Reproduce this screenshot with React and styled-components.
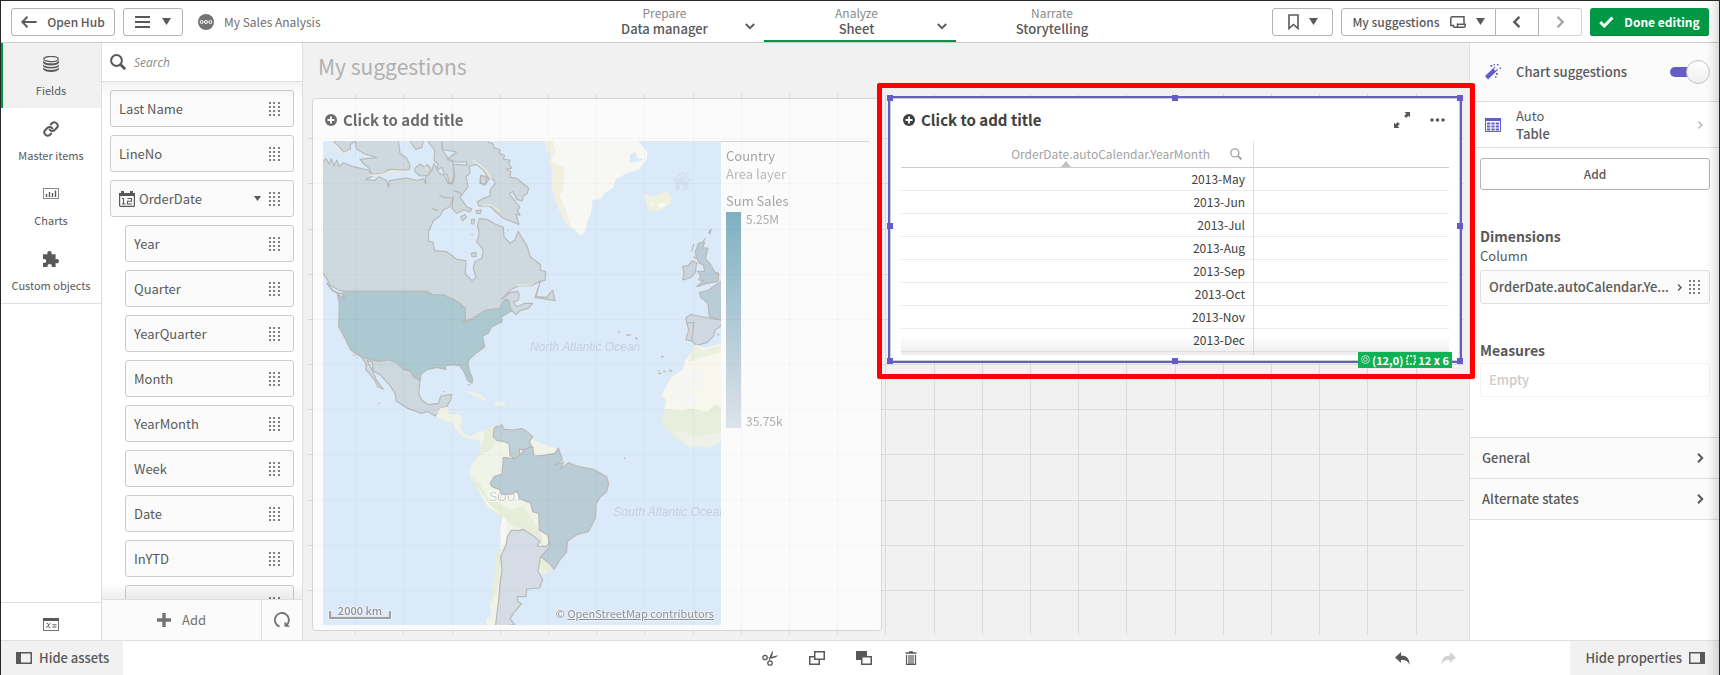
import React from "react";
import styled, { createGlobalStyle, css } from "styled-components";
import { Link as ChainLink } from "lucide-react";

const green = "#009845";
const purple = "#655dc6";
const line = "#dedede";
const ink = "#595959";

const GlobalStyle = createGlobalStyle`
  *, *::before, *::after { box-sizing: border-box; }
  body { margin: 0; }
  body, button, input, table {
    font-family: "Noto Sans CJK KR", "Noto Sans", sans-serif;
    font-size: 13px;
    line-height: 18px;
    color: ${ink};
  }
  button { cursor: pointer; padding: 0; margin: 0; border: 0; background: none; }
  svg { display: block; flex: none; }
`;

/* ---------- page frame ---------- */

const Page = styled.div`
  position: relative;
  display: flex;
  flex-direction: column;
  height: 100vh;
  min-height: 480px;
  border: 1px solid #26262e;
  border-bottom: 0;
  background: #fff;
`;

const EdgeShade = styled.div`
  position: absolute;
  top: 0;
  right: 0;
  bottom: 0;
  width: 13px;
  z-index: 3;
  pointer-events: none;
  background: linear-gradient(to left, rgba(0, 0, 0, 0.13), rgba(0, 0, 0, 0.03) 60%, transparent);
`;

const Workspace = styled.main`
  flex: 1;
  min-height: 0;
  display: flex;
`;

/* ---------- toolbar ---------- */

const Toolbar = styled.header`
  display: grid;
  grid-template-columns: 1fr auto 1fr;
  height: 42px;
  border-bottom: 1px solid #ccc;
`;

const ToolGroup = styled.div`
  display: flex;
  align-items: center;
  justify-content: ${(p) => (p.$end ? "flex-end" : "flex-start")};
  gap: 8px;
  padding: 0 10px;
`;

const Button = styled.button`
  display: flex;
  align-items: center;
  justify-content: center;
  gap: ${(p) => p.$gap || 10}px;
  height: 28px;
  padding: 0 10px;
  border: 1px solid #b3b3b3;
  border-radius: 3px;
  font-size: 12px;
  font-weight: 500;
  white-space: nowrap;
  ${(p) => p.$width && css`width: ${p.$width}px;`}
  ${(p) => p.$primary && css`
    border: 0;
    background: ${green};
    box-shadow: inset 0 -1px 0 #00803a;
    color: #fff;
    font-weight: 700;
  `}
`;

const Segments = styled.div`
  display: flex;

  ${Button} { border-radius: 0; }
  ${Button}:first-child { border-radius: 3px 0 0 3px; }
  ${Button}:last-child { border-radius: 0 3px 3px 0; }
  ${Button} + ${Button} { border-left: 0; }
  ${Button}:disabled { border-color: #d2d2d2; }
`;

const AppName = styled.div`
  display: flex;
  align-items: center;
  gap: 10px;
  margin-left: 7px;
  font-size: 12px;
  color: #6e6e6e;
`;

const Tabs = styled.nav`
  display: flex;
`;

const Tab = styled.button`
  display: grid;
  grid-template-columns: 1fr auto;
  align-items: center;
  width: 192px;
  padding: 0 ${(p) => (p.$menu ? 9 : 0)}px 0 0;
  border-bottom: 2px solid ${(p) => (p.$active ? green : "transparent")};
  & > svg { margin-top: 10px; }
`;

const TabText = styled.span`
  display: flex;
  flex-direction: column;
  align-items: center;
  font-weight: 500;
  line-height: 16px;
  ${(p) => p.$menu && css`margin-right: -12px;`}
`;

const TabHint = styled.span`
  font-size: 12px;
  font-weight: 400;
  line-height: 16px;
  color: #8a8a8a;
`;

/* ---------- left rail ---------- */

const Rail = styled.nav`
  flex: none;
  display: flex;
  flex-direction: column;
  width: 101px;
  border-right: 1px solid ${line};
`;

const RailTabs = styled.div`
  border-bottom: 1px solid ${line};
`;

const RailTab = styled.button`
  display: flex;
  flex-direction: column;
  align-items: center;
  gap: 9px;
  width: 100%;
  height: 65px;
  padding: 13px 2px 0 0;
  border-left: 2px solid ${(p) => (p.$active ? green : "transparent")};
  background: ${(p) => (p.$active ? "#f1f1f1" : "transparent")};
  font-size: 11px;
  white-space: nowrap;
`;

const VariablesButton = styled.button`
  display: flex;
  align-items: center;
  justify-content: center;
  height: 38px;
  margin-top: auto;
  padding-top: 6px;
  border-top: 1px solid ${line};
`;

/* ---------- assets panel ---------- */

const Assets = styled.section`
  flex: none;
  display: flex;
  flex-direction: column;
  width: 201px;
  border-right: 1px solid ${line};
`;

const SearchRow = styled.label`
  flex: none;
  display: flex;
  align-items: center;
  gap: 8px;
  height: 39px;
  padding: 0 8px;
  border-bottom: 1px solid ${line};
`;

const SearchInput = styled.input`
  flex: 1;
  min-width: 0;
  padding: 2px 0 0;
  border: 0;
  outline: 0;
  background: none;
  font-family: "Open Sans", "Noto Sans", sans-serif;
  font-size: 12px;
  font-style: italic;
  &::placeholder { color: #8c8c8c; opacity: 1; }
`;

const FieldScroller = styled.div`
  position: relative;
  flex: 1;
  min-height: 0;
  overflow: hidden;
  &::before, &::after {
    content: "";
    position: absolute;
    left: 0;
    right: 0;
    height: 16px;
    pointer-events: none;
  }
  &::before { top: 0; background: linear-gradient(rgba(0, 0, 0, 0.05), transparent); }
  &::after { bottom: 0; background: linear-gradient(transparent, rgba(0, 0, 0, 0.07)); }
`;

const FieldList = styled.ul`
  display: flex;
  flex-direction: column;
  gap: 8px;
  margin: 0;
  padding: 8px;
  list-style: none;
`;

const Field = styled.li`
  display: flex;
  align-items: center;
  gap: 4px;
  height: 37px;
  margin-left: ${(p) => (p.$nested ? 15 : 0)}px;
  padding: 0 13px 0 8px;
  border: 1px solid #ccc;
  border-radius: 3px;
  background: #fbfbfb;
`;

const FieldName = styled.span`
  flex: 1;
`;

const CaretSlot = styled.span`
  margin-right: 4px;
`;

const AssetActions = styled.div`
  flex: none;
  display: flex;
  height: 41px;
  border-top: 1px solid ${line};
  background: #fbfbfb;
`;

const AssetAction = styled.button`
  display: flex;
  align-items: center;
  justify-content: center;
  gap: 11px;
  color: #737373;
  flex: ${(p) => (p.$grow ? "1" : "none")};
  & + & { width: 41px; border-left: 1px solid ${line}; }
`;

/* ---------- sheet ---------- */

const Sheet = styled.section`
  position: relative;
  z-index: 1;
  flex: 1;
  min-width: 0;
  display: flex;
  flex-direction: column;
  padding: 0 5px 5px;
  background: #f1f1f1;
`;

const SheetTitle = styled.h1`
  margin: 0;
  height: 51px;
  padding: 9px 10px;
  font-size: 21px;
  font-weight: 400;
  line-height: 28px;
  color: #b0b0b0;
`;

const Canvas = styled.div`
  position: relative;
  flex: 1;
  min-height: 0;
  display: grid;
  grid-template-columns: 1fr 1fr;
  grid-template-rows: 1fr 1fr;
`;

const GridLines = styled.div`
  position: absolute;
  inset: 0;
  display: flex;
  flex-direction: ${(p) => (p.$rows ? "column" : "row")};
  span { flex: 1; }
  span + span { ${(p) => (p.$rows ? "border-top" : "border-left")}: 1px solid #dadada; }
`;

const Cell = styled.div`
  position: relative;
  grid-row: ${(p) => (p.$tall ? "span 2" : "auto")};
  min-width: 0;
  min-height: 0;
  padding: 4px;
`;

const Card = styled.article`
  display: flex;
  flex-direction: column;
  height: 100%;
  padding: 0 10px 5px;
  border: 1px solid #ccc;
  border-radius: 4px;
  background: #fff;
  opacity: ${(p) => (p.$dimmed ? 0.75 : 1)};
`;

const CardHead = styled.div`
  flex: none;
  display: flex;
  align-items: center;
  gap: 20px;
  height: 42px;
  padding: 0 4px 0 2px;
`;

const CardTitle = styled.h2`
  flex: 1;
  display: flex;
  align-items: center;
  gap: 6px;
  margin: 0;
  font-size: 15px;
  font-weight: 700;
  line-height: 20px;
  color: #404040;
`;

/* ---------- map ---------- */

const MapBody = styled.div`
  flex: 1;
  min-height: 0;
  display: flex;
  margin-right: 2px;
`;

const MapView = styled.div`
  position: relative;
  flex: 1;
  min-width: 0;
  overflow: hidden;
  border-top-left-radius: 4px;
  background: #d4e8fc;
  svg.world { width: 100%; height: 100%; }
`;

const OceanLabel = styled.span`
  position: absolute;
  left: ${(p) => p.$left}%;
  top: ${(p) => p.$top}%;
  font-family: "Liberation Sans", Arial, sans-serif;
  font-size: 12px;
  font-style: italic;
  line-height: 16px;
  white-space: nowrap;
  color: #b6c4e4;
`;

const ScaleBar = styled.span`
  position: absolute;
  left: 6px;
  bottom: 6px;
  width: 62px;
  height: 8px;
  border: 2px solid #858585;
  border-top: 0;
  outline: 1px solid rgba(255, 255, 255, 0.5);
`;

const ScaleText = styled.span`
  position: absolute;
  left: 6px;
  bottom: 7px;
  width: 62px;
  text-align: center;
  font-size: 11px;
  font-weight: 500;
  line-height: 16px;
  color: #707070;
  text-shadow: 0 0 2px #fff, 0 0 2px #fff;
`;

const Attribution = styled.span`
  position: absolute;
  right: 7px;
  bottom: 4px;
  font-size: 11px;
  line-height: 16px;
  color: #707070;
  text-shadow: 0 0 2px #fff, 0 0 2px #fff;
  a { color: inherit; }
`;

const Legend = styled.div`
  flex: none;
  width: 148px;
  padding: 5px 0 0 5px;
  border-top: 1px solid #ccc;
`;

const LegendLabel = styled.div`
  font-size: 13px;
  line-height: 18px;
  margin-top: ${(p) => (p.$spaced ? 9 : 0)}px;
  color: ${(p) => (p.$light ? "#a8a8a8" : "#8a8a8a")};
`;

const LegendScale = styled.div`
  display: flex;
  gap: 5px;
  height: 216px;
  margin-top: 2px;
`;

const LegendRamp = styled.div`
  width: 15px;
  background: linear-gradient(#5a9bb0, #d8dee9);
`;

const LegendRange = styled.div`
  display: flex;
  flex-direction: column;
  justify-content: space-between;
  padding-bottom: 1px;
  font-size: 12px;
  line-height: 13px;
  color: #959595;
`;

/* ---------- straight table ---------- */

const TableView = styled.div`
  position: relative;
  flex: 1;
  min-height: 0;
  overflow: hidden;
  &::after {
    content: "";
    position: absolute;
    left: 0;
    right: 0;
    bottom: 0;
    height: 20px;
    background: linear-gradient(transparent, rgba(0, 0, 0, 0.07));
    pointer-events: none;
  }
`;

const Table = styled.table`
  width: 100%;
  table-layout: fixed;
  border-collapse: separate;
  border-spacing: 0;
  color: #404040;

  th, td {
    height: 23px;
    padding: 0 8px 0 0;
    border-bottom: 1px solid #ebebeb;
    font-size: 12px;
    line-height: 18px;
    font-weight: 400;
    text-align: right;
  }
  th { height: 27px; border-bottom-color: #ccc; }
  th:first-child, td:first-child { width: 353px; border-right: 1px solid ${line}; }
`;

const HeaderCell = styled.span`
  position: relative;
  display: flex;
  align-items: center;
  justify-content: flex-end;
  gap: 20px;
  height: 26px;
  padding-right: 3px;
  color: #a3a3a3;
`;

const SortMark = styled.span`
  position: absolute;
  bottom: 0;
  right: 174px;
  border: 5px solid transparent;
  border-top: 0;
  border-bottom: 6px solid #c0c0c0;
`;

const Selection = styled.div`
  position: absolute;
  inset: 2px;
  border: 2px solid ${purple};
  pointer-events: none;
`;

const Handle = styled.span`
  position: absolute;
  width: 6px;
  height: 6px;
  background: ${purple};
  ${(p) => (p.$y === "top" ? "top: -3px;" : p.$y === "bottom" ? "bottom: -3px;" : "top: calc(50% - 6px);")}
  ${(p) => (p.$x === "left" ? "left: -3px;" : p.$x === "right" ? "right: -3px;" : "left: calc(50% - 3px);")}
`;

const SizeBadge = styled.span`
  position: absolute;
  right: 8px;
  bottom: -7px;
  display: flex;
  align-items: center;
  gap: 2px;
  height: 16px;
  padding: 0 3px;
  background: #0fb155;
  color: #fff;
  font-size: 11px;
  font-weight: 700;
  line-height: 16px;
  white-space: nowrap;
  svg + span { margin-right: 1px; }
  span:last-child { margin: 0; }
`;

const Highlight = styled.div`
  position: absolute;
  inset: -11px -11px -14px -9px;
  border: 5px solid #f00;
  border-radius: 2px;
  pointer-events: none;
`;

/* ---------- properties ---------- */

const Properties = styled.aside`
  flex: none;
  display: flex;
  flex-direction: column;
  width: 250px;
  border-left: 1px solid ${line};
`;

const PropRow = styled.div`
  display: flex;
  align-items: center;
  gap: 15px;
  height: ${(p) => p.$height}px;
  padding: 0 9px 0 15px;
  border-bottom: 1px solid ${line};
  background: ${(p) => (p.$shaded ? "#fbfbfb" : "#fff")};
`;

const PropLabel = styled.label`
  flex: 1;
  font-weight: 500;
`;

const Switch = styled.input`
  appearance: none;
  position: relative;
  flex: none;
  width: 40px;
  height: 24px;
  margin: 0;
  &::before {
    content: "";
    position: absolute;
    inset: 7px 8px 7px 0;
    border-radius: 5px;
    background: ${purple};
  }
  &::after {
    content: "";
    position: absolute;
    top: 0;
    right: 0;
    width: 24px;
    height: 24px;
    border: 1px solid #c4c4c4;
    border-radius: 50%;
    background: linear-gradient(#fff, #eee);
  }
`;

const ChartType = styled.button`
  display: flex;
  align-items: center;
  gap: 15px;
  height: 46px;
  padding: 0 15px;
  border-bottom: 1px solid ${line};
  text-align: left;
`;

const ChartTypeText = styled.span`
  flex: 1;
  display: flex;
  flex-direction: column;
  strong { font-weight: 500; }
`;

const PropBody = styled.div`
  flex: none;
  display: flex;
  flex-direction: column;
  height: 289px;
  padding: 10px 9px 0 10px;
  ${Button} { height: 32px; }
`;

const PropHeading = styled.h3`
  margin: 36px 0 0;
  font-size: 14px;
  font-weight: 700;
  line-height: 20px;
`;

const PropHint = styled.div`
  margin-bottom: 4px;
  line-height: 20px;
`;

const DimensionItem = styled.button`
  flex: none;
  display: flex;
  align-items: center;
  gap: 6px;
  height: 34px;
  padding: 0 9px 0 8px;
  border: 1px solid ${line};
  border-radius: 3px;
  background: #fbfbfb;
  font-weight: 500;
`;

const DimensionName = styled.span`
  flex: 1;
  text-align: left;
  white-space: nowrap;
`;

const EmptyItem = styled.div`
  flex: none;
  display: flex;
  align-items: center;
  height: 34px;
  margin-top: 3px;
  padding: 0 8px;
  border: 1px solid #f3f3f3;
  border-radius: 3px;
  color: #ccc;
  font-weight: 500;
`;

const Section = styled.button`
  flex: none;
  display: flex;
  align-items: center;
  justify-content: space-between;
  height: 41px;
  padding: 0 14px 0 12px;
  border-top: 1px solid ${line};
  background: #fbfbfb;
  font-weight: 500;
  &:last-child { height: 42px; border-bottom: 1px solid ${line}; }
`;

/* ---------- footer ---------- */

const Footer = styled.footer`
  flex: none;
  display: grid;
  grid-template-columns: 1fr auto 1fr;
  height: 35px;
  border-top: 1px solid ${line};
`;

const FooterSide = styled.div`
  display: flex;
  align-items: center;
  justify-content: ${(p) => (p.$end ? "flex-end" : "flex-start")};
`;

const PanelToggle = styled.button`
  display: flex;
  align-items: center;
  gap: 7px;
  height: 100%;
  padding: 0 14px 0 15px;
  background: #f1f1f1;
  font-weight: 500;
`;

const IconBar = styled.div`
  display: flex;
  align-items: center;
  gap: 31px;
  margin-right: ${(p) => (p.$history ? 114 : 0)}px;
  margin-left: ${(p) => (p.$history ? 0 : -40)}px;
`;

/* ---------- icons ---------- */

const Svg = ({ w = 16, h = 16, box, children, ...rest }) => (
  <svg width={w} height={h} viewBox={box || `0 0 ${w} ${h}`} fill="none" aria-hidden="true" {...rest}>{children}</svg>
);

const Caret = ({ w = 9, h = 7 }) => (
  <Svg w={w} h={h} box="0 0 8 6" preserveAspectRatio="none"><path d="M0 0h8L4 6z" fill={ink} /></Svg>
);

const Chevron = ({ dir = "right", color = ink, size = 10, weight = 2 }) => {
  const turn = { right: 0, down: 90, left: 180 }[dir];
  return (
    <Svg w={size} h={size} box="0 0 10 10">
      <path d="M3 .8 7.2 5 3 9.2" stroke={color} strokeWidth={weight} transform={`rotate(${turn} 5 5)`} />
    </Svg>
  );
};

const DragDots = () => (
  <Svg w={11} h={14}>
    {[0, 4, 8, 12].map((y) => [0, 4, 9].map((x) => (
      <rect key={`${x}-${y}`} x={x} y={y} width="2" height="2" fill="#808080" />
    )))}
  </Svg>
);

const BackArrow = () => (
  <Svg w={16} h={12}><path d="M15.6 6H1.5M6.500 .8 1.300 6l5.200 5.200" stroke={ink} strokeWidth="2" /></Svg>
);
const MenuIcon = () => (
  <Svg w={15} h={12}><path d="M0 1h15M0 6h15M0 11h15" stroke={ink} strokeWidth="2" /></Svg>
);
const AppIcon = () => (
  <Svg>
    <circle cx="8" cy="8" r="8" fill="#737373" />
    <circle cx="3.700" cy="8" r="1.500" stroke="#fff" /><circle cx="8" cy="8" r="1.500" stroke="#fff" /><circle cx="12.300" cy="8" r="1.500" stroke="#fff" />
  </Svg>
);
const BookmarkIcon = () => (
  <Svg w={11} h={16}><path d="M1 1h9v13.500L5.500 10.500 1 14.500z" stroke={ink} strokeWidth="1.600" /></Svg>
);
const SheetIcon = () => (
  <Svg w={16} h={12}>
    <path d="M3.500 11.200V9.500H.8V2.300Q.8.800 2.300.8H14v7" stroke={ink} strokeWidth="1.500" />
    <path d="M3.500 11.200h10.200q1.500 0 1.500-1.500V8.200H7.500v3" stroke={ink} strokeWidth="1.500" />
  </Svg>
);
const CheckIcon = () => (
  <Svg w={15} h={12}><path d="M1.300 6.200 5.300 10 13.500 1.500" stroke="#fff" strokeWidth="3" /></Svg>
);

const DatabaseIcon = () => (
  <Svg>
    <ellipse cx="8" cy="3" rx="7.300" ry="2.600" stroke={ink} strokeWidth="1.200" />
    <path d="M0 4.500c1 2 4 2.800 8 2.800s7-.8 8-2.800v2.300c-1 2-4 2.700-8 2.700S1 8.800 0 6.800z" fill={ink} />
    <path d="M0 8.500c1 1.600 4 2.500 8 2.500s7-.9 8-2.500v1.600c-1 1.800-4 2.500-8 2.500s-7-.7-8-2.500z" fill={ink} />
    <path d="M0 11.600c1 1.600 4 2.500 8 2.500s7-.9 8-2.500v1.400c-.8 2-4 3-8 3s-7.200-1-8-3z" fill={ink} />
  </Svg>
);
const LinkIcon = () => <ChainLink size={16} strokeWidth={3} color={ink} aria-hidden="true" />;
const ChartsIcon = () => (
  <Svg>
    <rect x=".5" y="2.500" width="15" height="10" stroke="#8a8a8a" />
    <path d="M3.500 11V8M6.500 11V6M9.500 11V7M12.500 11V4.500" stroke={ink} strokeWidth="1.400" />
  </Svg>
);
const PuzzleIcon = () => (
  <Svg>
    <path d="M0 3.200h4.600C3.700 1.600 5 0 6.500 0s2.800 1.600 1.900 3.200h4.200v5.200c1.700-1 3.400.2 3.400 1.800s-1.700 2.700-3.400 1.700V16H8.600c.9-1.800-.4-3-1.900-3s-2.800 1.200-2 3H0v-4.400c1.800.9 3.200-.2 3.200-1.600S1.800 7.500 0 8.400z" fill={ink} />
  </Svg>
);
const VariablesIcon = () => (
  <Svg w={16} h={13}>
    <rect x=".5" y=".5" width="15" height="12" stroke="#737373" />
    <path d="M0 0h16v3H0z" fill={ink} />
    <path d="M3.500 5.500c1.600-.4 2 .6 2 2s.5 2.600 1.800 2M7.500 5.300c-1.500.2-3 3.800-4.300 4.300M9.500 6.800h4M9.500 9h4" stroke={ink} strokeWidth="1" />
  </Svg>
);
const SearchIcon = ({ size = 16, color = ink, weight = 2 }) => (
  <Svg w={size} h={size} box="0 0 16 16">
    <circle cx="6.500" cy="6.500" r="5.400" stroke={color} strokeWidth={weight} />
    <path d="m10.500 10.500 4.700 4.700" stroke={color} strokeWidth={weight + 0.8} />
  </Svg>
);
const CalendarIcon = () => (
  <Svg>
    <rect x=".6" y="2.600" width="14.800" height="12.800" rx="1" stroke={ink} strokeWidth="1.200" />
    <path d="M0 2h2V0h3v2h6V0h3v2h2v3H0z" fill={ink} />
    <path d="M3 7.500h1.500V13M3 13h3.500M8.500 7.500h4v2.700h-4V13H13" stroke={ink} strokeWidth="1.100" />
  </Svg>
);
const PlusIcon = () => (
  <Svg w={14} h={14}><path d="M7 0v14M0 7h14" stroke="#737373" strokeWidth="3.400" /></Svg>
);
const RefreshIcon = () => (
  <Svg>
    <path d="M5.500 14.600A7 7 0 1 1 13 12.800" stroke="#737373" strokeWidth="1.800" />
    <path d="M10.500 9.500v5.300H16z" fill="#737373" />
  </Svg>
);
const AddTitleIcon = () => (
  <Svg w={12} h={12}>
    <circle cx="6" cy="6" r="6" fill="#404040" />
    <path d="M6 2.500v7M2.500 6h7" stroke="#fff" strokeWidth="1.800" />
  </Svg>
);
const ExpandIcon = () => (
  <Svg>
    <path d="M10.500 0H16v5.500l-1.700-1.700-2.100 2.100-2-2 2.100-2.200zM5.500 16H0v-5.500l1.700 1.700 2-2.100 2.100 2-2.100 2.100z" fill={ink} />
  </Svg>
);
const MoreIcon = () => (
  <Svg w={15} h={4}><circle cx="2" cy="2" r="1.800" fill={ink} /><circle cx="7.500" cy="2" r="1.800" fill={ink} /><circle cx="13" cy="2" r="1.800" fill={ink} /></Svg>
);
const TargetIcon = () => (
  <Svg w={9} h={9}><circle cx="4.500" cy="4.500" r="4" stroke="#b5e6c9" /><circle cx="4.500" cy="4.500" r="1.800" stroke="#b5e6c9" /></Svg>
);
const AreaIcon = () => (
  <Svg w={10} h={10}><rect x="1" y="1" width="8" height="8" stroke="#fff" strokeWidth="1.600" strokeDasharray="2 1.200" /></Svg>
);
const WandIcon = () => (
  <Svg>
    <path d="M0 12 10 2.500 13 5.800 3 15.500z" fill={purple} />
    <path d="m8.800 5 2-2 1.600 1.800-2 2z" fill="#fff" />
    <path d="M5.500 1h1.800v1.800H5.500zM12 0h1.500v1.500H12zM14.500 3.500H16V5h-1.500zM11 9h1.800v1.800H11zM10 12.300h1.500v1.500H10zM8.500 0H10v1.200H8.500z" fill={purple} />
  </Svg>
);
const TableIcon = () => (
  <Svg w={16} h={14}>
    <rect x=".5" y=".5" width="15" height="13" stroke={purple} />
    <path d="M0 0h16v3H0z" fill={purple} />
    <path d="M2 5.500h12M2 8.500h12M2 11.500h12" stroke={purple} strokeWidth="1.800" strokeDasharray="3.300 1.050" />
  </Svg>
);
const CutIcon = () => (
  <Svg>
    <circle cx="3" cy="7.500" r="2.200" stroke={ink} strokeWidth="1.300" />
    <circle cx="8" cy="13" r="2.200" stroke={ink} strokeWidth="1.300" />
    <path d="M5 8 16 5.200c-1.500 2.300-4.500 3-7.500 3.400zM7.800 11 7 8.500 10.500.5c1 2.500 0 5.500-2 8z" fill={ink} />
  </Svg>
);
const CopyIcon = () => (
  <Svg w={16} h={14}>
    <rect x="5.750" y=".75" width="9.500" height="7.500" stroke={ink} strokeWidth="1.500" />
    <path d="M5 5.750H.75v7.500h9.500V9" stroke={ink} strokeWidth="1.500" />
  </Svg>
);
const PasteIcon = () => (
  <Svg w={16} h={14}>
    <path d="M0 0h11v9H0z" fill={ink} />
    <rect x="5.750" y="5.750" width="9.500" height="7.500" fill="#fff" stroke={ink} strokeWidth="1.500" />
  </Svg>
);
const TrashIcon = () => (
  <Svg w={16} h={14} box="-2.500 0 16 14">
    <path d="M0 2h11M3.500 1h4" stroke={ink} strokeWidth="1.600" />
    <path d="M1 4v9.300h9V4M3.500 4v9M5.500 4v9M7.500 4v9" stroke={ink} strokeWidth="1.200" />
  </Svg>
);
const UndoIcon = ({ color = ink, flip }) => (
  <Svg w={15} h={13}>
    <path d="M0 5.500 6 0v3.500c5.500 0 8.800 3 8.500 9.500-1.200-3.500-3.500-5.200-8.500-5v3z" fill={color} transform={flip ? "matrix(-1 0 0 1 15 0)" : undefined} />
  </Svg>
);
const PanelIcon = ({ right }) => (
  <Svg w={16} h={12}>
    <rect x=".75" y=".75" width="14.500" height="10.500" stroke={ink} strokeWidth="1.500" />
    <path d={right ? "M11 0h5v12h-5z" : "M0 0h5v12H0z"} fill={ink} />
  </Svg>
);

/* ---------- map drawing ---------- */

const edge = { stroke: "#a8a6a4", strokeWidth: 3.5, strokeLinejoin: "round" };

const WorldMap = () => (
  <svg className="world" viewBox="39 153 1194 1452" preserveAspectRatio="xMidYMid slice" aria-label="Sales by country" role="img">
    {/* Greenland and Iceland */}
    <path fill="#f3efdc" d="M705 153 708 182 722 190 715 220 728 232 725 290 733 320 745 355 758 385 778 412 800 418 760 330 762 230 735 153z" />
    <path fill="#f9f9f6" d="M728 153 738 185 722 212 748 225 762 232 760 300 748 315 762 345 775 385 785 412 812 437 825 425 833 392 843 370 848 330 870 328 885 310 910 292 918 268 950 250 985 240 1010 210 1012 185 985 153z" />
    <path fill="#d4e8fc" d="M975 186 982 204 1002 208 985 215 960 218 960 195z" />
    <path fill="#eef1d6" d="M1000 312 1014 314 1018 322 1040 316 1070 305 1084 325 1082 340 1060 354 1045 362 1015 362 1010 345z" />
    <path fill="#fbfbf6" d="M1040 342 1062 336 1066 350 1048 354zM1022 335h8v12h-8z" />

    {/* Canada */}
    <path {...edge} fill="#c1d2da" d="M30 140 530 140 536 158 548 160 552 172 570 180 568 190 584 196 580 208 600 210 596 222 606 234 588 238 602 244 600 262 622 266 640 282 656 294 652 310 640 318 636 333 620 328 608 304 598 312 616 335 630 352 622 360 630 376 618 372 627 403 605 395 580 385 562 370 540 348 506 348 502 335 520 325 540 318 540 300 556 280 550 268 530 262 512 256 510 280 524 286 536 268 520 240 500 224 478 228 480 250 468 260 474 290 458 312 450 322 470 350 485 356 480 366 462 360 440 370 426 355 430 320 420 350 400 360 390 378 370 392 356 425 355 453 368 456 374 482 410 485 440 508 468 512 466 552 486 572 498 562 490 535 495 515 515 505 520 480 500 455 508 430 502 410 508 385 530 388 555 402 580 412 582 440 600 460 615 450 624 424 640 450 652 470 660 500 692 524 690 540 707 545 706 570 690 576 678 620 710 622 728 600 735 632 675 622 692 572 668 586 625 588 605 598 590 612 575 628 600 608 622 604 628 615 625 630 610 636 620 650 645 640 668 640 655 655 630 662 618 674 605 662 600 652 595 630 585 628 575 655 530 660 500 678 458 697 466 685 465 655 430 628 400 615 365 613 350 604 100 604 85 600 60 585 50 565 39 550 30 535z" />
    <path fill="none" stroke="#a8a6a4" strokeWidth="5" strokeLinejoin="round" d="M50 578 66 600 80 608 98 612 102 626" />
    <g {...edge} fill="#d4e8fc">
      <path d="M30 140 73 140 74 158 88 170 102 187 122 178 120 165 135 153 140 178 165 192 200 203 150 208 162 222 178 236 184 252 218 252 240 238 282 240 298 238 300 225 290 205 270 190 264 140 296 140 304 160 318 178 336 172 340 150 352 140 358 160 374 180 372 210 384 222 380 240 396 232 402 252 412 255 416 276 424 280 432 262 430 218 415 206 398 182 396 140 396 178 440 186 412 208 440 216 470 216 470 226 430 222 434 258 428 282 414 280 404 258 388 250 372 220 366 240 346 262 348 282 340 266 322 272 290 264 262 268 238 272 236 292 230 272 208 260 192 272 168 268 188 258 174 240 130 230 100 218 88 230 80 210 72 228 64 206 58 222 48 206 30 222z" />
      <ellipse cx="520" cy="270" rx="9" ry="12" fill="#c1d2da" />
    </g>
    <g {...edge} fill="#c1d2da">
      <path d="M315 235 330 222 345 232 352 224 362 236 356 256 330 258 315 245zM452 380 464 374 470 382 458 392zM484 388 494 388 492 402 485 402zM498 362 514 360 512 370 500 370z" />
      <path d="M484 490 498 488 498 500 486 500zM366 355 384 362M388 314 400 322 424 324M430 302 450 308 456 318M484 434h4M592 422h4" />
    </g>
    <path fill="none" stroke="#efe8cf" strokeWidth="4" d="M178 256 215 254 246 242 285 248M488 212 505 222 530 244 545 268M516 344 545 346 572 366M620 586 668 584M345 230 352 240M72 164 100 190 122 182" />

    {/* United States and Mexico */}
    <path {...edge} fill="#96bbc6" d="M82 612 104 626 100 604 350 604 365 613 400 615 430 628 450 640 465 655 466 685 458 697 495 686 500 676 530 660 570 656 576 640 585 628 597 632 600 652 606 662 575 680 576 696 545 710 535 730 518 738 524 770 500 788 478 808 474 822 478 842 488 868 486 880 474 872 462 846 450 828 430 824 404 828 408 838 380 832 350 840 333 852 330 872 312 860 300 842 280 838 262 820 240 810 205 814 155 802 122 780 100 735 86 710 88 640z" />
    <path {...edge} fill="#c1cfd8" d="M155 802 205 814 240 810 262 820 280 838 300 842 312 862 330 872 326 910 335 930 355 944 385 940 392 918 425 913 422 930 410 950 390 955 388 968 375 978 352 964 335 970 295 956 258 932 256 912 240 886 212 856 190 842 186 815 172 812 188 842 198 868 220 898 204 890 192 868 178 850 168 840 168 822z" />
    <path fill="none" stroke="#a8a6a4" strokeWidth="3" d="M128 795h8M138 802h4M205 940h5M400 905h5M472 884h8" />

    {/* Caribbean and Central America */}
    <path fill="#f0f2e2" d="M465 902 490 906 512 916 530 928 522 933 500 920 480 912zM552 935 575 934 588 942 580 948 556 947zM602 945h12v4h-12z" />
    <path fill="#f1f3e3" d="M378 980 390 955 412 950 416 972 452 974 458 990 450 1012 462 1030 484 1038 500 1028 520 1040 508 1050 478 1046 458 1040 440 1022 428 1000 402 990z" />

    {/* South America */}
    <path fill="#f0f4e6" d="M500 1030 528 1020 552 1008 600 1030 662 1042 690 1060 735 1074 745 1080 740 1150 700 1300 722 1360 726 1440 708 1450 684 1446 640 1340 592 1340 560 1605 530 1605 528 1588 545 1575 538 1545 550 1500 560 1440 572 1380 572 1310 578 1275 540 1250 520 1228 510 1200 492 1178 480 1160 482 1130 500 1104 514 1082 510 1056z" />
    <path fill="#e3ecd2" d="M524 1020 552 1012 562 1050 540 1080 500 1102 520 1060zM482 1160 508 1180 530 1220 575 1245 600 1260 640 1250 690 1320 700 1370 650 1320 610 1310 570 1280 530 1250zM688 1402 728 1430 724 1445 690 1444zM560 1380 574 1400 566 1470 548 1540 540 1540 552 1470z" />
    <path fill="#f9faf6" d="M480 1150 500 1190 545 1250 590 1290 588 1340 572 1380 570 1320 578 1278 535 1250 505 1200z" />
    <text x="538" y="1232" fontFamily="Liberation Sans, Arial, sans-serif" fontSize="36" fill="#bdbdbd" stroke="#fff" strokeWidth="6" paintOrder="stroke">SOUT</text>
    <path {...edge} fill="#afc5d0" d="M552 1016 550 1040 562 1052 580 1054 597 1060 600 1095 612 1106 630 1102 628 1078 645 1078 666 1070 658 1055 668 1040 650 1024 636 1016 610 1020 582 1018 575 1004 566 1012 560 1008z" />
    <path {...edge} fill="#a8c1cd" d="M580 1102 612 1106 632 1094 640 1080 668 1070 672 1098 702 1096 734 1090 745 1074 757 1108 736 1126 760 1116 752 1136 776 1118 806 1130 850 1138 872 1150 890 1160 896 1180 890 1205 870 1222 858 1242 856 1284 836 1324 800 1334 772 1354 770 1386 750 1410 732 1438 722 1424 692 1400 718 1368 714 1336 688 1320 686 1270 668 1265 662 1240 630 1226 620 1202 606 1212 575 1213 568 1198 546 1190 541 1180 552 1160 576 1152z" />
    <path {...edge} fill="#ccd6e1" d="M592 1340 605 1320 625 1322 640 1318 665 1334 690 1354 682 1368 708 1370 720 1356 718 1372 692 1400 684 1444 698 1470 688 1494 650 1497 648 1520 622 1520 624 1534 634 1542 610 1570 600 1586 614 1604 556 1612 566 1530 570 1480 576 1440 572 1400 590 1360z" />

    {/* Western Europe */}
    <g {...edge} fill="#a8c1cd">
      <path d="M1165 460 1184 456 1178 474 1194 474 1186 505 1202 524 1214 546 1226 550 1224 574 1190 580 1160 590 1180 572 1166 570 1172 556 1162 544 1184 544 1180 524 1168 520 1158 500 1156 484zM1196 428 1203 418 1200 432zM1178 456 1186 444" />
      <path fill="none" d="M1144 484 1152 462M1150 500 1158 506" />
      <path fill="#bbcdd7" d="M1118 530 1136 526 1146 512 1160 518 1156 548 1140 564 1118 570 1122 550z" />
      <path d="M1240 572 1220 582 1196 600 1168 608 1172 622 1194 640 1198 680 1240 692z" />
      <path fill="#c6d1dc" d="M1128 684 1142 673 1165 678 1240 692 1240 702 1215 720 1210 740 1190 758 1160 766 1145 752 1128 750 1136 720 1130 698z" />
      <path fill="none" d="M1130 698 1152 698 1145 752" />
    </g>

    {/* West Africa and Atlantic islands */}
    <path fill="#fbfaee" d="M1240 758 1185 775 1158 764 1140 790 1125 812 1120 838 1085 862 1068 890 1055 915 1068 930 1062 970 1240 980z" />
    <path fill="#eaf1d8" d="M1155 768 1180 780 1240 764 1240 785 1180 800 1135 815 1140 790z" />
    <path fill="#f7f7f4" d="M1120 840 1170 840 1190 880 1130 900 1170 930 1150 950 1090 930 1080 890z" />
    <path fill="#e4edd4" d="M1066 956 1115 962 1140 955 1190 965 1215 945 1240 950 1240 1052 1195 1072 1165 1068 1140 1075 1100 1045 1070 1020 1055 990z" />
    <path fill="#eef2e6" d="M1095 1030 1120 1022 1160 1042 1200 1030 1240 1030 1240 1055 1195 1072 1165 1068 1140 1075z" />
    <path fill="none" stroke="#b0aca0" strokeWidth="5" d="M948 735h14M927 722v6M976 742l6 6M1053 800h8M1045 850h8M1060 844h6M1046 840v4M1078 840l8 4M1222 734h6M942 1105h4" />
  </svg>
);

const HomeMark = styled.button`
  position: absolute;
  top: 29px;
  right: 30px;
  color: #c9dbee;
`;

/* ---------- data ---------- */

const fields = [
  { name: "Last Name" },
  { name: "LineNo" },
  { name: "OrderDate", date: true },
  { name: "Year", nested: true },
  { name: "Quarter", nested: true },
  { name: "YearQuarter", nested: true },
  { name: "Month", nested: true },
  { name: "YearMonth", nested: true },
  { name: "Week", nested: true },
  { name: "Date", nested: true },
  { name: "InYTD", nested: true },
  { name: "", nested: true },
];

const railTabs = [
  { label: "Fields", icon: <DatabaseIcon />, active: true },
  { label: "Master items", icon: <LinkIcon /> },
  { label: "Charts", icon: <ChartsIcon /> },
  { label: "Custom objects", icon: <PuzzleIcon /> },
];

const tabs = [
  { hint: "Prepare", name: "Data manager", menu: true },
  { hint: "Analyze", name: "Sheet", menu: true, active: true },
  { hint: "Narrate", name: "Storytelling" },
];

const months = ["2013-May", "2013-Jun", "2013-Jul", "2013-Aug", "2013-Sep", "2013-Oct", "2013-Nov", "2013-Dec"];

const handles = [
  ["left", "top"], ["mid", "top"], ["right", "top"],
  ["left", "mid"], ["right", "mid"],
  ["left", "bottom"], ["mid", "bottom"], ["right", "bottom"],
];

const repeat = (n) => Array.from({ length: n }, (_, i) => <span key={i} />);

/* ---------- app ---------- */

export default function App() {
  return (
    <Page>
      <GlobalStyle />
      <Toolbar>
        <ToolGroup>
          <Button $width={104} $gap={10}><BackArrow />Open Hub</Button>
          <Button $width={60} $gap={12} aria-label="Menu"><MenuIcon /><Caret /></Button>
          <AppName><AppIcon />My Sales Analysis</AppName>
        </ToolGroup>
        <Tabs>
          {tabs.map((t) => (
            <Tab key={t.name} $active={t.active} $menu={t.menu}>
              <TabText $menu={t.menu}><TabHint>{t.hint}</TabHint>{t.name}</TabText>
              {t.menu && <Chevron dir="down" weight={1.8} />}
            </Tab>
          ))}
        </Tabs>
        <ToolGroup $end>
          <Button $width={61} aria-label="Bookmarks"><BookmarkIcon /><Caret /></Button>
          <Segments>
            <Button $width={155}>My suggestions<SheetIcon /><Caret /></Button>
            <Button $width={43} aria-label="Previous sheet"><Chevron dir="left" size={12} /></Button>
            <Button $width={43} aria-label="Next sheet" disabled><Chevron color="#a6a6a6" size={12} /></Button>
          </Segments>
          <Button $primary $width={119}><CheckIcon />Done editing</Button>
        </ToolGroup>
      </Toolbar>

      <Workspace>
        <Rail>
          <RailTabs>
            {railTabs.map((t) => (
              <RailTab key={t.label} $active={t.active}>{t.icon}{t.label}</RailTab>
            ))}
          </RailTabs>
          <VariablesButton aria-label="Variables"><VariablesIcon /></VariablesButton>
        </Rail>

        <Assets>
          <SearchRow>
            <SearchIcon />
            <SearchInput type="text" placeholder="Search" aria-label="Search fields" />
          </SearchRow>
          <FieldScroller>
            <FieldList>
              {fields.map((f) => (
                <Field key={f.name} $nested={f.nested}>
                  {f.date && <CalendarIcon />}
                  <FieldName>{f.name}</FieldName>
                  {f.date && <CaretSlot><Caret w={7} h={5} /></CaretSlot>}
                  <DragDots />
                </Field>
              ))}
            </FieldList>
          </FieldScroller>
          <AssetActions>
            <AssetAction $grow><PlusIcon />Add</AssetAction>
            <AssetAction aria-label="Refresh"><RefreshIcon /></AssetAction>
          </AssetActions>
        </Assets>

        <Sheet>
          <SheetTitle>My suggestions</SheetTitle>
          <Canvas>
            <GridLines>{repeat(24)}</GridLines>
            <GridLines $rows>{repeat(12)}</GridLines>
            <Cell $tall>
              <Card $dimmed>
                <CardHead>
                  <CardTitle><AddTitleIcon />Click to add title</CardTitle>
                </CardHead>
                <MapBody>
                  <MapView>
                    <WorldMap />
                    <HomeMark aria-label="Home">
                      <Svg w={18} h={20}><path d="M0 10 9 1l9 9-1.500 1L9 4l-7.500 7zM2.500 12 9 6l6.500 6v8h-5v-5h-4v5h-4zM13 2h2.500v4L13 4z" fill="currentColor" /></Svg>
                    </HomeMark>
                    <OceanLabel $left={52} $top={41}>North Atlantic Ocean</OceanLabel>
                    <OceanLabel $left={73} $top={75}>South Atlantic Ocean</OceanLabel>
                    <ScaleBar />
                    <ScaleText>2000 km</ScaleText>
                    <Attribution>© <a href="#osm">OpenStreetMap contributors</a></Attribution>
                  </MapView>
                  <Legend>
                    <LegendLabel>Country</LegendLabel>
                    <LegendLabel $light>Area layer</LegendLabel>
                    <LegendLabel $spaced>Sum Sales</LegendLabel>
                    <LegendScale>
                      <LegendRamp />
                      <LegendRange><span>5.25M</span><span>35.75k</span></LegendRange>
                    </LegendScale>
                  </Legend>
                </MapBody>
              </Card>
            </Cell>
            <Cell>
              <Card>
                <CardHead>
                  <CardTitle><AddTitleIcon />Click to add title</CardTitle>
                  <button aria-label="Full screen"><ExpandIcon /></button>
                  <button aria-label="More"><MoreIcon /></button>
                </CardHead>
                <TableView>
                  <Table>
                    <thead>
                      <tr>
                        <th scope="col">
                          <HeaderCell>
                            OrderDate.autoCalendar.YearMonth
                            <SearchIcon size={12} color="#a3a3a3" weight={1.8} />
                            <SortMark />
                          </HeaderCell>
                        </th>
                        <th />
                      </tr>
                    </thead>
                    <tbody>
                      {months.map((m) => <tr key={m}><td>{m}</td><td /></tr>)}
                      <tr><td /><td /></tr>
                    </tbody>
                  </Table>
                </TableView>
              </Card>
              <Selection>
                {handles.map(([x, y]) => <Handle key={x + y} $x={x} $y={y} />)}
                <SizeBadge><TargetIcon /><span>(12,0)</span><AreaIcon /><span>12 x 6</span></SizeBadge>
              </Selection>
              <Highlight />
            </Cell>
          </Canvas>
        </Sheet>

        <Properties>
          <PropRow $height={59} $shaded>
            <WandIcon />
            <PropLabel htmlFor="suggestions">Chart suggestions</PropLabel>
            <Switch id="suggestions" type="checkbox" role="switch" defaultChecked />
          </PropRow>
          <ChartType>
            <TableIcon />
            <ChartTypeText><span>Auto</span><strong>Table</strong></ChartTypeText>
            <Chevron color="#bfbfbf" size={8} />
          </ChartType>
          <PropBody>
            <Button>Add</Button>
            <PropHeading>Dimensions</PropHeading>
            <PropHint>Column</PropHint>
            <DimensionItem>
              <DimensionName>OrderDate.autoCalendar.Ye...</DimensionName>
              <Chevron size={7} />
              <DragDots />
            </DimensionItem>
            <PropHeading>Measures</PropHeading>
            <EmptyItem>Empty</EmptyItem>
          </PropBody>
          <Section>General<Chevron /></Section>
          <Section>Alternate states<Chevron /></Section>
        </Properties>
      </Workspace>

      <Footer>
        <FooterSide>
          <PanelToggle><PanelIcon />Hide assets</PanelToggle>
        </FooterSide>
        <IconBar>
          <button aria-label="Cut"><CutIcon /></button>
          <button aria-label="Copy"><CopyIcon /></button>
          <button aria-label="Paste"><PasteIcon /></button>
          <button aria-label="Delete"><TrashIcon /></button>
        </IconBar>
        <FooterSide $end>
          <IconBar $history>
            <button aria-label="Undo"><UndoIcon /></button>
            <button aria-label="Redo" disabled><UndoIcon flip color="#d4d4d4" /></button>
          </IconBar>
          <PanelToggle>Hide properties<PanelIcon right /></PanelToggle>
        </FooterSide>
      </Footer>
      <EdgeShade />
    </Page>
  );
}
